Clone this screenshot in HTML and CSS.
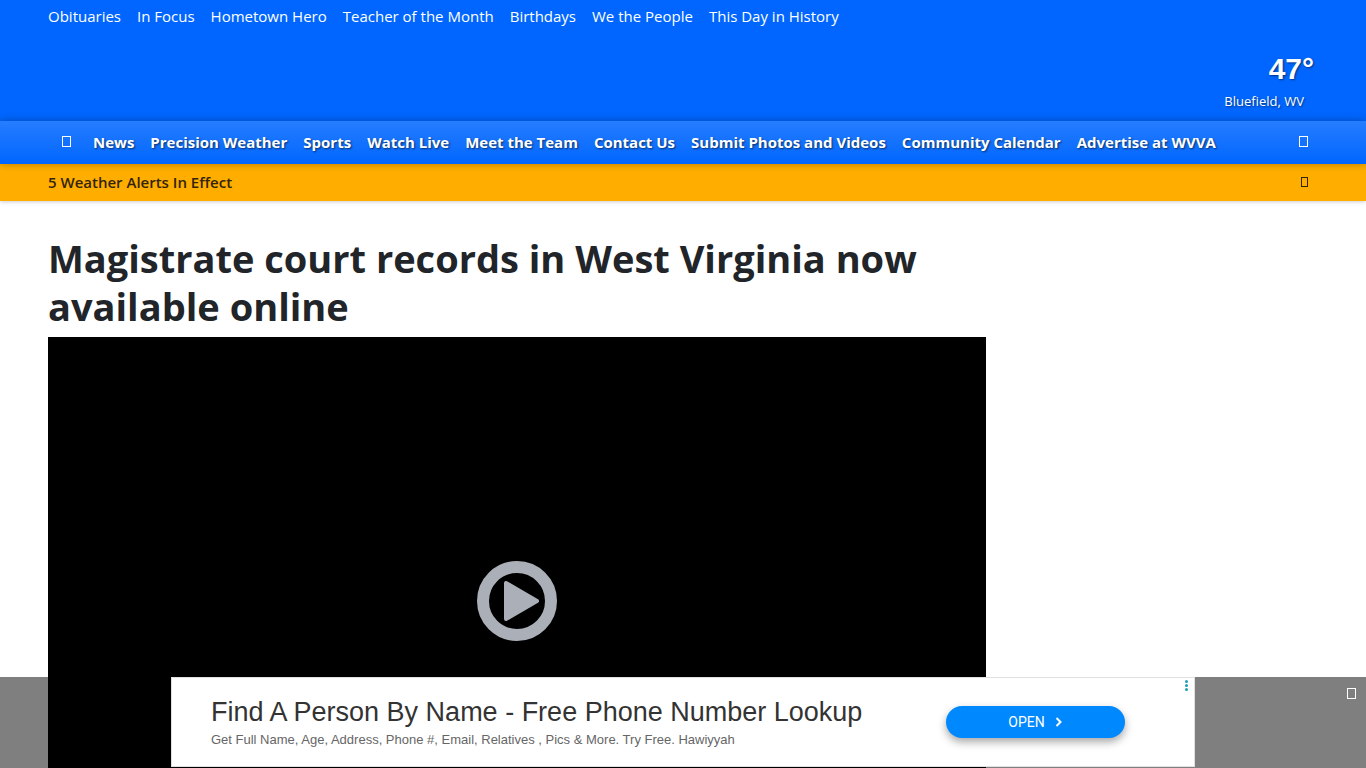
FILE: index.html
```
<!DOCTYPE html>
<html lang="en">
  <head>
    <meta charset="utf-8" />
    <meta name="viewport" content="width=device-width, initial-scale=1" />
    <title>Magistrate court records in West Virginia now available online</title>
    <link rel="stylesheet" href="styles.css">
  </head>

  <body>
    <header class="masthead">
      <nav class="top-links" aria-label="Quick links">
        <a href="#">Obituaries</a>
        <a href="#">In Focus</a>
        <a href="#">Hometown Hero</a>
        <a href="#">Teacher of the Month</a>
        <a href="#">Birthdays</a>
        <a href="#">We the People</a>
        <a href="#">This Day in History</a>
      </nav>
      <a class="weather" href="#">
        <span class="weather-temp">47°</span>
        <span class="weather-city">Bluefield, WV</span>
      </a>
    </header>

    <nav class="main-nav" aria-label="Sections">
      <a class="home" href="#" aria-label="Home">
        <svg class="icon" viewBox="0 0 9 11"><rect x="0.5" y="0.5" width="8" height="10" /></svg>
      </a>
      <a href="#">News</a>
      <a href="#">Precision Weather</a>
      <a href="#">Sports</a>
      <a href="#">Watch Live</a>
      <a href="#">Meet the Team</a>
      <a href="#">Contact Us</a>
      <a href="#">Submit Photos and Videos</a>
      <a href="#">Community Calendar</a>
      <a href="#">Advertise at WVVA</a>
      <button class="icon-button search" type="button" aria-label="Search">
        <svg class="icon" viewBox="0 0 9 11"><rect x="0.5" y="0.5" width="8" height="10" /></svg>
      </button>
    </nav>

    <div class="alerts">
      <a href="#">5 Weather Alerts In Effect</a>
      <button class="icon-button" type="button" aria-label="Show alerts">
        <svg class="icon icon-small" viewBox="0 0 7 10"><rect x="0.5" y="0.5" width="6" height="9" /></svg>
      </button>
    </div>

    <div class="content">
      <main>
        <h1>Magistrate court records in West Virginia now available online</h1>
        <div class="video">
          <button class="play" type="button" aria-label="Play video">
            <svg viewBox="0 0 80 80">
              <circle cx="40" cy="40" r="34" />
              <path d="M29 22v36l31-18z" />
            </svg>
          </button>
        </div>
      </main>
      <aside></aside>
    </div>

    <!-- sticky ad -->
    <div class="ad-bar">
      <div class="ad">
        <div class="ad-text">
          <a class="ad-title" href="#">Find A Person By Name - Free Phone Number Lookup</a>
          <a class="ad-desc" href="#">Get Full Name, Age, Address, Phone #, Email, Relatives , Pics &amp; More. Try Free. Hawiyyah</a>
        </div>
        <button class="ad-open" type="button">
          OPEN
          <svg viewBox="0 0 8 10"><path d="M1.5 1l4 4l-4 4" /></svg>
        </button>
        <button class="ad-menu" type="button" aria-label="Ad options">
          <svg viewBox="0 0 3 11">
            <circle cx="1.5" cy="1.5" r="1.5" />
            <circle cx="1.5" cy="5.5" r="1.5" />
            <circle cx="1.5" cy="9.5" r="1.5" />
          </svg>
        </button>
      </div>
      <button class="icon-button ad-close" type="button" aria-label="Close ad">
        <svg class="icon" viewBox="0 0 9 11"><rect x="0.5" y="0.5" width="8" height="10" /></svg>
      </button>
    </div>
  </body>
</html>
```

FILE: styles.css
```
* {
  box-sizing: border-box;
}
body {
  margin: 0;
  font-family: "Segoe UI", "Open Sans", sans-serif;
  font-size: 15px;
  line-height: 24px;
  color: #212529;
  background-color: #fff;
}

a {
  color: inherit;
  text-decoration: none;
}

button {
  padding: 0;
  border: 0;
  background: none;
  color: inherit;
  cursor: pointer;
}

svg {
  display: block;
}

.icon {
  width: 9px;
  height: 11px;
  fill: none;
  stroke: currentColor;
}

.icon-small {
  width: 7px;
  height: 10px;
}

.masthead {
  padding: 4px 48px 8px;
  background-color: #06f;
  color: #fff;
}

.top-links {
  display: flex;
  gap: 16px;
}

.weather {
  display: flex;
  flex-direction: column;
  align-items: flex-end;
  padding-top: 21px;
  text-shadow: 1px 1px 2px rgba(0, 0, 0, 0.5);
}

.weather-temp {
  margin-right: 4px;
  font-family: Arial, "Liberation Sans", sans-serif;
  font-size: 30px;
  font-weight: bold;
  line-height: 40px;
}

.weather-city {
  margin-right: 14px;
  font-size: 13px;
}

.main-nav {
  position: relative;
  display: flex;
  align-items: center;
  gap: 16px;
  height: 43px;
  padding: 0 58px 2px 62px;
  background: linear-gradient(#267dff, #06f);
  box-shadow: 0 0 8px rgba(0, 0, 0, 0.3);
  color: #fff;
  font-weight: bold;
  text-shadow: 1px 1px 2px rgba(0, 0, 0, 0.6);
}

.home {
  margin-right: 6px;
}

.search {
  margin-left: auto;
}

.alerts {
  display: flex;
  align-items: center;
  justify-content: space-between;
  height: 37px;
  padding: 0 58px 2px 48px;
  background-color: #ffae00;
  box-shadow: 0 1px 4px rgba(0, 0, 0, 0.2);
  color: #33240a;
  font-weight: 600;
}

.content {
  display: grid;
  grid-template-columns: 1fr 300px;
  gap: 32px;
  padding: 33px 48px 0;
}

h1 {
  margin: 0 0 7px;
  font-size: 38px;
  font-weight: bold;
  line-height: 48px;
}

.video {
  display: flex;
  align-items: center;
  justify-content: center;
  aspect-ratio: 16 / 9;
  background-color: #000;
}

.play svg {
  width: 80px;
  height: 80px;
  fill: #abb0b8;
  stroke: #abb0b8;
  stroke-width: 4;
  stroke-linejoin: round;
}

.play circle {
  fill: none;
  stroke-width: 12;
}

.ad-bar {
  position: fixed;
  right: 0;
  bottom: 0;
  left: 0;
  display: flex;
  justify-content: center;
  padding-bottom: 1px;
  background-color: rgba(0, 0, 0, 0.5);
}

.ad {
  position: relative;
  display: flex;
  align-items: center;
  justify-content: space-between;
  width: 1024px;
  height: 90px;
  padding: 0 69px 0 39px;
  border: 1px solid #e0e0e0;
  background-color: #fff;
  font-family: Arial, "Liberation Sans", sans-serif;
}

.ad-text {
  display: flex;
  flex-direction: column;
  padding-top: 4px;
}

.ad-title {
  color: #333;
  font-size: 27px;
  line-height: 32px;
}

.ad-desc {
  color: #666;
  font-size: 13px;
}

.ad-open {
  display: flex;
  align-items: center;
  justify-content: center;
  gap: 10px;
  width: 179px;
  height: 32px;
  border-radius: 16px;
  background-color: #08f;
  box-shadow: 0 4px 8px rgba(0, 0, 0, 0.35);
  color: #fff;
  font-family: Roboto, sans-serif;
  font-size: 14px;
}

.ad-open svg {
  width: 8px;
  height: 10px;
  fill: none;
  stroke: #fff;
  stroke-width: 2;
}

.ad-menu {
  position: absolute;
  top: 2px;
  right: 6px;
}

.ad-menu svg {
  width: 3px;
  height: 11px;
  fill: #1f9fb5;
}

.ad-close {
  position: absolute;
  top: 11px;
  right: 10px;
  color: #fff;
}
```
